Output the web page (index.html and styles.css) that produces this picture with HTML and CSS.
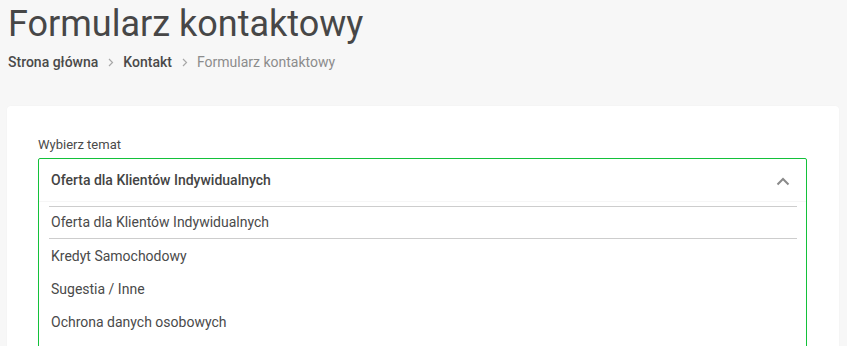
FILE: index.html
```html
<!DOCTYPE html>
<html lang="pl">
<head>
<meta charset="utf-8">
<title>Formularz kontaktowy</title>
<link rel="stylesheet" href="styles.css">
</head>
<body>
<header class="page-head">
  <h1 class="title">Formularz kontaktowy</h1>
  <nav class="crumbs">
    <a class="crumb" href="#">Strona główna</a>
    <svg class="sep" width="6" height="9" viewBox="0 0 6 9"><path d="M1 1l3.5 3.5L1 8" fill="none" stroke="#a8a8a8" stroke-width="1.2"/></svg>
    <a class="crumb" href="#">Kontakt</a>
    <svg class="sep" width="6" height="9" viewBox="0 0 6 9"><path d="M1 1l3.5 3.5L1 8" fill="none" stroke="#a8a8a8" stroke-width="1.2"/></svg>
    <span class="crumb current">Formularz kontaktowy</span>
  </nav>
</header>
<main class="card">
  <label class="label">Wybierz temat</label>
  <div class="select">
    <div class="select-head">
      <span class="select-value">Oferta dla Klientów Indywidualnych</span>
      <svg class="chev" width="14" height="9" viewBox="0 0 14 9"><path d="M1.5 7.5L7 2l5.5 5.5" fill="none" stroke="#8a8a8a" stroke-width="2"/></svg>
    </div>
    <ul class="options">
      <li class="option selected">Oferta dla Klientów Indywidualnych</li>
      <li class="option">Kredyt Samochodowy</li>
      <li class="option">Sugestia / Inne</li>
      <li class="option">Ochrona danych osobowych</li>
    </ul>
  </div>
</main>
</body>
</html>
```
FILE: styles.css
```css
html, body {
  margin: 0;
  padding: 0;
}
body {
  background: #f7f7f7;
  font-family: Roboto, "Liberation Sans", sans-serif;
  color: #4a4a4a;
  height: 346px;
  overflow: hidden;
}
.page-head {
  padding: 0 8px;
}
.title {
  margin: 2px 0 0;
  font-size: 36px;
  font-weight: 400;
  line-height: 44px;
  color: #474747;
}
.crumbs {
  display: flex;
  align-items: center;
  margin-top: 6px;
  height: 20px;
  font-size: 14px;
}
.crumb {
  color: #4a4a4a;
  font-weight: 500;
  text-decoration: none;
}
.crumb.current {
  color: #8c8c8c;
  font-weight: 400;
}
.sep {
  margin: 0 9px 0 10px;
}
.card {
  display: block;
  margin: 34px 8px 0 7px;
  background: #fff;
  border-radius: 4px;
  padding: 31px 32px 40px 31px;
  box-shadow: 0 0 2px rgba(0,0,0,0.03);
}
.label {
  display: block;
  font-size: 13px;
  line-height: 16px;
  color: #4a4a4a;
  margin-bottom: 5px;
}
.select {
  border: 1px solid #13c13a;
  border-radius: 2px;
}
.select-head {
  display: flex;
  align-items: center;
  justify-content: space-between;
  height: 42px;
  padding: 0 16px 0 12px;
  box-shadow: 0 1px 0 #f6f6f6;
}
.select-value {
  font-size: 14px;
  font-weight: 500;
  color: #444;
  margin-top: -1px;
}
.chev {
  margin-top: 3px;
}
.options {
  list-style: none;
  margin: 5px 9px 0 10px;
  padding: 0 0 14px;
}
.option {
  box-sizing: border-box;
  height: 33px;
  line-height: 32px;
  padding: 1px 0 0 2px;
  font-size: 14px;
  color: #4a4a4a;
}
.option.selected {
  border-top: 1px solid #cdcdcd;
  border-bottom: 1px solid #cdcdcd;
  line-height: 31px;
  padding-top: 0;
}
```
